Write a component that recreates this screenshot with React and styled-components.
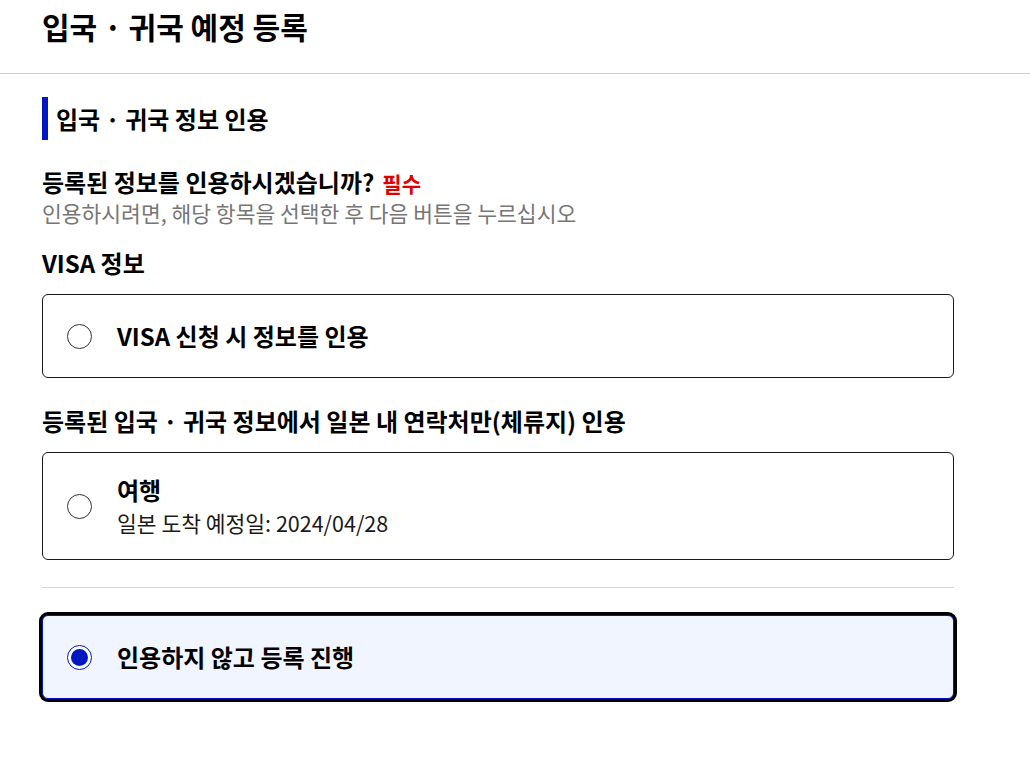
import React, { useState } from "react";
import styled, { createGlobalStyle, css } from "styled-components";

const GlobalStyle = createGlobalStyle`
  body {
    margin: 0;
    background: #fff;
    color: #1a1a1a;
    font-family: "Noto Sans CJK KR", "Noto Sans", sans-serif;
  }
`;

const Header = styled.header`
  height: 74px;
  border-bottom: 1px solid #cccccc;
  padding: 6px 0 0 42px;
  box-sizing: border-box;
`;

const PageTitle = styled.h1`
  margin: 0;
  font-size: 30px;
  line-height: 40px;
  font-weight: 700;
  color: #000;
`;

const Main = styled.main`
  width: 912px;
  padding: 23px 0 40px 42px;
`;

const SectionTitle = styled.h2`
  margin: 0;
  border-left: 6px solid #0017c1;
  padding-left: 8px;
  height: 43px;
  box-sizing: border-box;
  display: flex;
  align-items: center;
  font-size: 24px;
  font-weight: 700;
  color: #000;
`;

const Question = styled.p`
  margin: 27px 0 0;
  font-size: 24px;
  line-height: 30px;
  font-weight: 700;
  color: #000;
`;

const Required = styled.span`
  color: #e00000;
  font-size: 21px;
  margin-left: 8px;
`;

const Hint = styled.p`
  margin: 0;
  font-size: 21.5px;
  line-height: 30px;
  color: #767676;
`;

const GroupLabel = styled.h3`
  margin: ${(p) => p.$top}px 0 13px;
  font-size: 24px;
  line-height: 36px;
  font-weight: 700;
  color: #000;
`;

const Card = styled.label`
  display: flex;
  align-items: center;
  gap: 25px;
  box-sizing: border-box;
  height: ${(p) => p.$height}px;
  padding: 0 24px;
  border: 1px solid #1a1a1a;
  border-radius: 6px;
  background: #fff;
  cursor: pointer;
  ${(p) =>
    p.$checked &&
    css`
      border-color: #0017c1;
      background: #f0f5ff;
      box-shadow: 0 0 0 3px #000;
    `}
`;

const Radio = styled.span`
  flex: none;
  width: 25px;
  height: 25px;
  box-sizing: border-box;
  border-radius: 50%;
  border: ${(p) => (p.$checked ? "1.5px solid #0017c1" : "1px solid #333")};
  background: #fff;
  display: flex;
  align-items: center;
  justify-content: center;
  &::after {
    content: "";
    display: ${(p) => (p.$checked ? "block" : "none")};
    width: 17px;
    height: 17px;
    border-radius: 50%;
    background: #0017c1;
  }
`;

const CardText = styled.div`
  display: flex;
  flex-direction: column;
  padding-top: ${(p) => (p.$twoLine ? 2 : 0)}px;
`;

const CardLabel = styled.span`
  font-size: 24px;
  line-height: 32px;
  font-weight: 700;
  color: #000;
`;

const CardSub = styled.span`
  font-size: 21.5px;
  line-height: 34px;
  color: #1a1a1a;
`;

const Divider = styled.hr`
  margin: 27px 0 27px;
  border: none;
  border-top: 1px solid #d8d8d8;
`;

const options = [
  { id: "visa", group: "VISA 정보", label: "VISA 신청 시 정보를 인용", height: 84, top: 17 },
  {
    id: "trip",
    group: "등록된 입국 · 귀국 정보에서 일본 내 연락처만(체류지) 인용",
    label: "여행",
    sub: "일본 도착 예정일: 2024/04/28",
    height: 108,
    top: 25,
  },
];

function Option({ opt, checked, onSelect }) {
  return (
    <Card $height={opt.height} $checked={checked} onClick={onSelect}>
      <Radio $checked={checked} />
      <CardText $twoLine={!!opt.sub}>
        <CardLabel>{opt.label}</CardLabel>
        {opt.sub && <CardSub>{opt.sub}</CardSub>}
      </CardText>
    </Card>
  );
}

export default function App() {
  const [selected, setSelected] = useState("none");

  return (
    <>
      <GlobalStyle />
      <Header>
        <PageTitle>입국 · 귀국 예정 등록</PageTitle>
      </Header>
      <Main>
        <SectionTitle>입국 · 귀국 정보 인용</SectionTitle>
        <Question>
          등록된 정보를 인용하시겠습니까?<Required>필수</Required>
        </Question>
        <Hint>인용하시려면, 해당 항목을 선택한 후 다음 버튼을 누르십시오</Hint>
        {options.map((opt) => (
          <div key={opt.id}>
            <GroupLabel $top={opt.top}>{opt.group}</GroupLabel>
            <Option
              opt={opt}
              checked={selected === opt.id}
              onSelect={() => setSelected(opt.id)}
            />
          </div>
        ))}
        <Divider />
        <Option
          opt={{ label: "인용하지 않고 등록 진행", height: 84 }}
          checked={selected === "none"}
          onSelect={() => setSelected("none")}
        />
      </Main>
    </>
  );
}
